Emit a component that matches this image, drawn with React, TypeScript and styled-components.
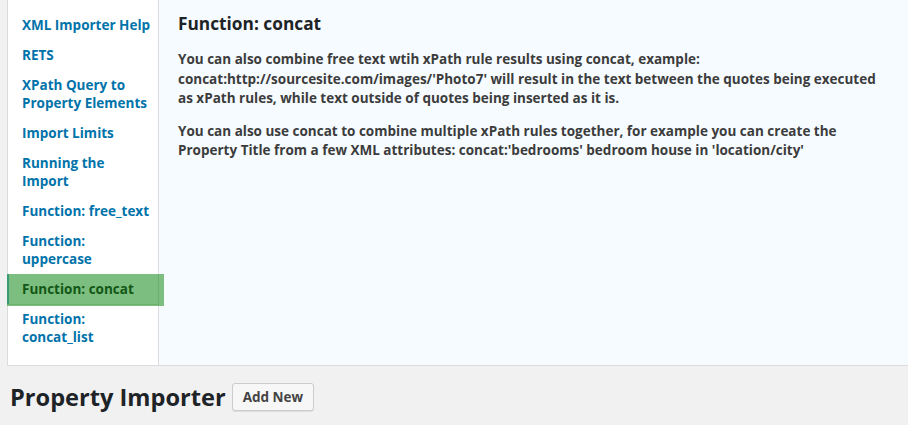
import * as React from "react";
import styled, { createGlobalStyle } from "styled-components";

const GlobalStyle = createGlobalStyle`
  html, body {
    margin: 0;
    padding: 0;
    background: #f1f1f1;
    font-family: "Open Sans", "Liberation Sans", sans-serif;
    overflow: hidden;
  }
`;

const Page = styled.div`
  width: 908px;
  height: 425px;
  overflow: hidden;
`;

const HelpPanel = styled.div`
  display: flex;
  margin-left: 7px;
  width: 920px;
  height: 366px;
  border-left: 1px solid #dcdcde;
  border-bottom: 1px solid #dcdcde;
  box-sizing: border-box;
  background: #f6fbff;
`;

const TabList = styled.ul`
  list-style: none;
  margin: 0;
  padding: 10px 0 0;
  width: 150px;
  flex: none;
  background: #fff;
  border-right: 1px solid #dcdcde;
`;

const Tab = styled.li<{ $active?: boolean }>`
  position: relative;
  padding: 6px 6px 6px 14px;
  font-size: 13.5px;
  line-height: 18px;
  font-weight: 700;
  color: ${(p) => (p.$active ? "#1d2327" : "#0073aa")};
  background: ${(p) => (p.$active ? "#f6fbff" : "transparent")};
  ${(p) =>
    p.$active &&
    `
    margin-left: -1px;
    padding-left: 13px;
    border-left: 2px solid #72aee6;
    box-shadow: 0 1px 0 #dcdcde;
    &::after {
      content: "";
      position: absolute;
      left: -2px;
      right: -6px;
      top: 0;
      bottom: -2px;
      background: rgba(10, 135, 10, 0.52);
    }
  `}
`;

const Content = styled.div`
  flex: 1;
  padding: 12px 20px 0 19px;
  color: #3c3c3c;
`;

const TabTitle = styled.h2`
  margin: 0 0 14px;
  font-size: 17.3px;
  line-height: 24px;
  font-weight: 700;
  color: #1d2327;
`;

const Para = styled.p`
  margin: 0 0 13px;
  width: 710px;
  font-size: 13.5px;
  line-height: 19.5px;
  font-weight: 700;
`;

const TitleRow = styled.div`
  display: flex;
  align-items: center;
  gap: 6px;
  padding: 15px 0 0 10px;
`;

const PageTitle = styled.h1`
  margin: 0;
  font-size: 23.6px;
  line-height: 32px;
  font-weight: 700;
  color: #1d2327;
`;

const AddButton = styled.button`
  font-family: inherit;
  font-size: 13.5px;
  font-weight: 700;
  color: #444;
  background: #f7f7f7;
  border: 1px solid #ccc;
  border-radius: 3px;
  padding: 0 10px;
  height: 28px;
  box-shadow: 0 1px 0 #ddd;
`;

const tabs = [
  "XML Importer Help",
  "RETS",
  "XPath Query to Property Elements",
  "Import Limits",
  "Running the Import",
  "Function: free_text",
  "Function: uppercase",
  "Function: concat",
  "Function: concat_list",
];

const App: React.FC = () => {
  const active = "Function: concat";
  return (
    <Page>
      <GlobalStyle />
      <HelpPanel>
        <TabList>
          {tabs.map((t) => (
            <Tab key={t} $active={t === active}>
              {t}
            </Tab>
          ))}
        </TabList>
        <Content>
          <TabTitle>Function: concat</TabTitle>
          <Para>
            You can also combine free text wtih xPath rule results using concat, example:
            concat:http://sourcesite.com/images/'Photo7' will result in the text between the
            quotes being executed as xPath rules, while text outside of quotes being inserted as
            it is.
          </Para>
          <Para>
            You can also use concat to combine multiple xPath rules together, for example you can
            create the Property Title from a few XML attributes: concat:'bedrooms' bedroom house
            in 'location/city'
          </Para>
        </Content>
      </HelpPanel>
      <TitleRow>
        <PageTitle>Property Importer</PageTitle>
        <AddButton>Add New</AddButton>
      </TitleRow>
    </Page>
  );
};

export default App;
